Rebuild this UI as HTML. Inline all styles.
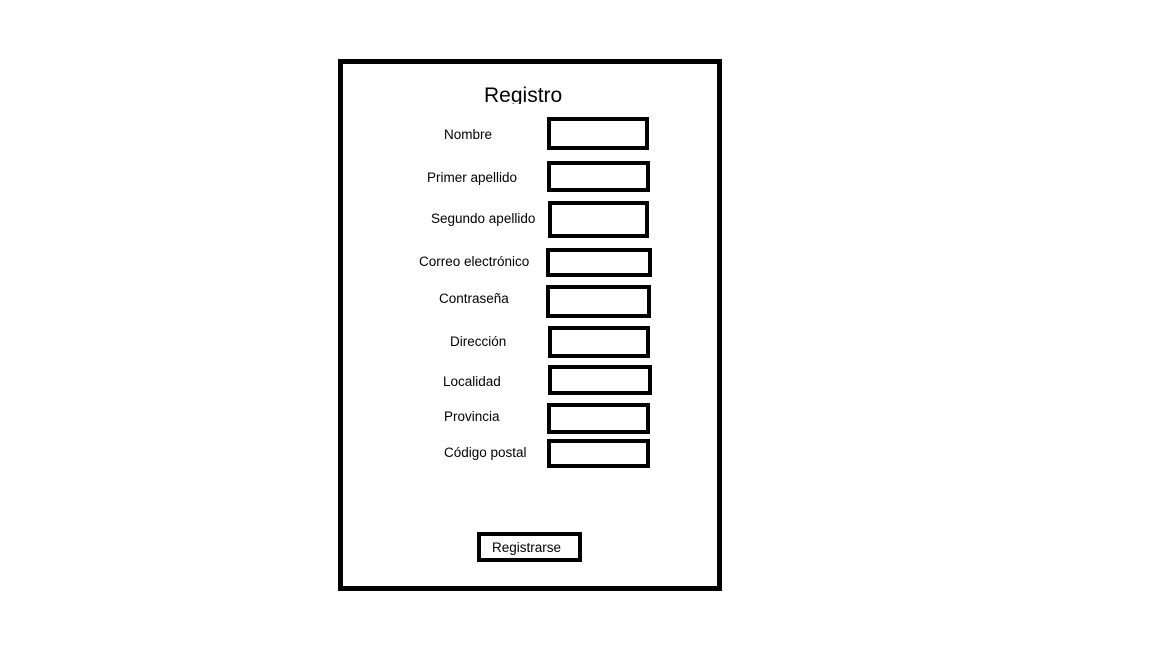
<!DOCTYPE html>
<html><head><meta charset="utf-8"><style>
body{margin:0;width:1152px;height:648px;background:#fff;position:relative;overflow:hidden;font-family:"Liberation Sans",sans-serif;color:#000}
div{position:absolute;box-sizing:border-box}
.b{border:4px solid #000}
.t{font-size:13.5px;white-space:nowrap;line-height:16px}
</style></head><body>
<div class="b" style="left:338px;top:59px;width:384px;height:532px;border-width:5px"></div>
<div style="left:484px;top:83px;font-size:21px;line-height:26px;height:21px;overflow:hidden">Registro</div>
<div class="t" style="left:444px;top:127px">Nombre</div>
<div class="t" style="left:427px;top:170px">Primer apellido</div>
<div class="t" style="left:431px;top:211px">Segundo apellido</div>
<div class="t" style="left:419px;top:254px">Correo electrónico</div>
<div class="t" style="left:439px;top:291px">Contraseña</div>
<div class="t" style="left:450px;top:334px">Dirección</div>
<div class="t" style="left:443px;top:374px">Localidad</div>
<div class="t" style="left:444px;top:409px">Provincia</div>
<div class="t" style="left:444px;top:445px">Código postal</div>
<div class="b" style="left:547px;top:117px;width:102px;height:33px"></div>
<div class="b" style="left:547px;top:161px;width:103px;height:31px"></div>
<div class="b" style="left:548px;top:201px;width:101px;height:37px"></div>
<div class="b" style="left:546px;top:248px;width:106px;height:29px"></div>
<div class="b" style="left:546px;top:285px;width:105px;height:33px"></div>
<div class="b" style="left:548px;top:326px;width:102px;height:32px"></div>
<div class="b" style="left:548px;top:365px;width:104px;height:30px"></div>
<div class="b" style="left:547px;top:403px;width:103px;height:31px"></div>
<div class="b" style="left:547px;top:439px;width:103px;height:29px"></div>
<div class="b" style="left:477px;top:532px;width:105px;height:30px"></div>
<div class="t" style="left:492px;top:540px">Registrarse</div>
</body></html>
